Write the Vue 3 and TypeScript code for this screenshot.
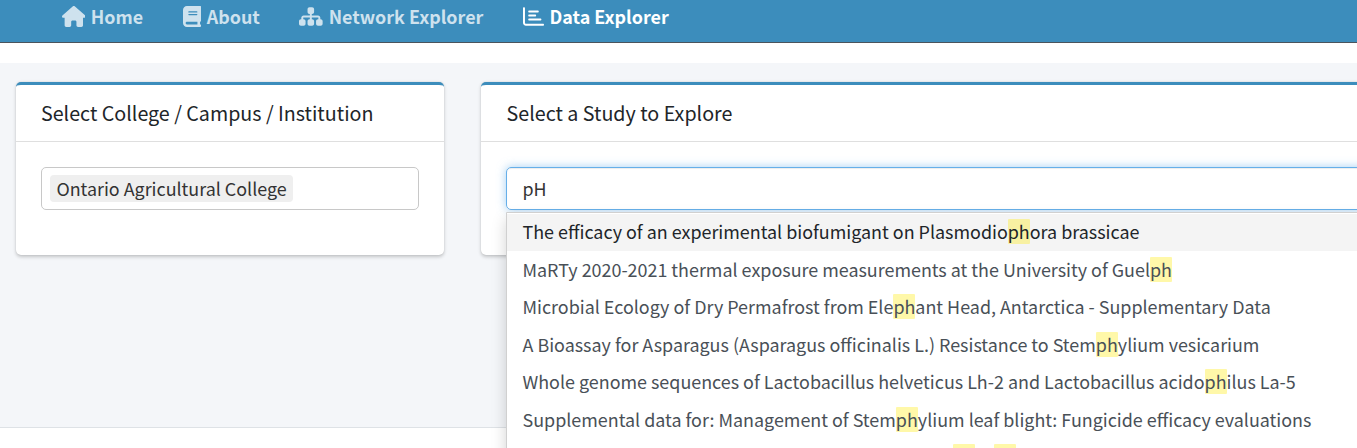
<script setup lang="ts">
interface NavItem {
  label: string
  width: number
  path: string
  active?: boolean
}

const navItems: NavItem[] = [
  {
    label: 'Home',
    width: 576,
    path: 'M575.8 255.5c0 18-15 32.1-32 32.1h-32l.7 160.2c0 2.7-.2 5.4-.5 8.1V472c0 22.1-17.9 40-40 40H456c-1.1 0-2.2 0-3.3-.1c-1.4 .1-2.8 .1-4.2 .1H416 392c-22.1 0-40-17.9-40-40V448 384c0-17.7-14.3-32-32-32H256c-17.7 0-32 14.3-32 32v64 24c0 22.1-17.9 40-40 40H160 128.1c-1.5 0-3-.1-4.5-.2c-1.2 .1-2.4 .2-3.6 .2H104c-22.1 0-40-17.9-40-40V360c0-.9 0-1.9 .1-2.8V287.6H32c-18 0-32-14-32-32.1c0-9 3-17 10-24L266.4 8c7-7 15-8 22-8s15 2 21 7L564.8 231.5c8 7 12 15 11 24z',
  },
  {
    label: 'About',
    width: 448,
    path: 'M96 0C43 0 0 43 0 96V416c0 53 43 96 96 96H384h32c17.7 0 32-14.3 32-32s-14.3-32-32-32V384c17.7 0 32-14.3 32-32V32c0-17.7-14.3-32-32-32H384 96zm0 384H352v64H96c-17.7 0-32-14.3-32-32s14.3-32 32-32zm32-240c0-8.8 7.2-16 16-16H336c8.8 0 16 7.2 16 16s-7.2 16-16 16H144c-8.8 0-16-7.2-16-16zm16 48H336c8.8 0 16 7.2 16 16s-7.2 16-16 16H144c-8.8 0-16-7.2-16-16s7.2-16 16-16z',
  },
  {
    label: 'Network Explorer',
    width: 576,
    path: 'M208 80c0-26.5 21.5-48 48-48h64c26.5 0 48 21.5 48 48v64c0 26.5-21.5 48-48 48h-8v40H464c30.9 0 56 25.1 56 56v32h8c26.5 0 48 21.5 48 48v64c0 26.5-21.5 48-48 48H464c-26.5 0-48-21.5-48-48V368c0-26.5 21.5-48 48-48h8V288c0-4.4-3.6-8-8-8H312v40h8c26.5 0 48 21.5 48 48v64c0 26.5-21.5 48-48 48H256c-26.5 0-48-21.5-48-48V368c0-26.5 21.5-48 48-48h8V280H112c-4.4 0-8 3.6-8 8v32h8c26.5 0 48 21.5 48 48v64c0 26.5-21.5 48-48 48H48c-26.5 0-48-21.5-48-48V368c0-26.5 21.5-48 48-48h8V288c0-30.9 25.1-56 56-56H264V192h-8c-26.5 0-48-21.5-48-48V80z',
  },
  {
    label: 'Data Explorer',
    width: 512,
    active: true,
    path: 'M24 32c13.3 0 24 10.7 24 24V408c0 13.3 10.7 24 24 24H488c13.3 0 24 10.7 24 24s-10.7 24-24 24H72c-39.8 0-72-32.2-72-72V56C0 42.7 10.7 32 24 32zM128 136c0-13.3 10.7-24 24-24l208 0c13.3 0 24 10.7 24 24s-10.7 24-24 24l-208 0c-13.3 0-24-10.7-24-24zm24 72H296c13.3 0 24 10.7 24 24s-10.7 24-24 24H152c-13.3 0-24-10.7-24-24s10.7-24 24-24zm0 96H424c13.3 0 24 10.7 24 24s-10.7 24-24 24H152c-13.3 0-24-10.7-24-24s10.7-24 24-24z',
  },
]

const studies: string[] = [
  'The efficacy of an experimental biofumigant on Plasmodiophora brassicae',
  'MaRTy 2020-2021 thermal exposure measurements at the University of Guelph',
  'Microbial Ecology of Dry Permafrost from Elephant Head, Antarctica - Supplementary Data',
  'A Bioassay for Asparagus (Asparagus officinalis L.) Resistance to Stemphylium vesicarium',
  'Whole genome sequences of Lactobacillus helveticus Lh-2 and Lactobacillus acidophilus La-5',
  'Supplemental data for: Management of Stemphylium leaf blight: Fungicide efficacy evaluations',
]

// Splits a title so that every odd part is a match of the query.
const parts = (title: string): string[] => title.split(/(ph)/)
</script>

<template>
  <div class="page">
    <nav class="navbar">
      <a v-for="n in navItems" :key="n.label" class="nav-link" :class="{ active: n.active }">
        <svg class="icon" :viewBox="`0 0 ${n.width} 512`" :style="{ width: `${(n.width / 512) * 21}px` }">
          <path :d="n.path" />
        </svg>
        <span>{{ n.label }}</span>
      </a>
    </nav>
    <main class="content">
      <section class="card college">
        <h3 class="card-header">Select College / Campus / Institution</h3>
        <div class="card-body">
          <div class="field"><span class="tag">Ontario Agricultural College</span></div>
        </div>
      </section>
      <section class="card study">
        <h3 class="card-header">Select a Study to Explore</h3>
        <div class="card-body">
          <div class="field focus">
            <span class="query">pH</span>
            <div class="dropdown">
              <div v-for="(s, i) in studies" :key="s" class="option" :class="{ selected: i === 0 }">
                <template v-for="(p, j) in parts(s)" :key="j"><mark v-if="j % 2">{{ p }}</mark><template v-else>{{ p }}</template></template>
              </div>
              <div class="option clipped"><mark class="blank"></mark><mark class="blank"></mark></div>
            </div>
          </div>
        </div>
      </section>
    </main>
    <footer class="footer"></footer>
  </div>
</template>

<style>
body {
  margin: 0;
  overflow: hidden;
}
</style>

<style scoped>
.page {
  display: flex;
  flex-direction: column;
  width: 1357px;
  height: 448px;
  overflow: hidden;
  background: #fff;
  color: #212529;
  font-family: "Noto Sans CJK SC", "Noto Sans", sans-serif;
  font-size: 17.9px;
  line-height: 25px;
}
.navbar {
  display: flex;
  flex: none;
  box-sizing: border-box;
  height: 43px;
  padding: 0 0 9px 61.5px;
  gap: 39.5px;
  align-items: center;
  background: #3c8dbc;
  border-bottom: 1px solid #4b545c;
}
.nav-link {
  display: flex;
  align-items: center;
  gap: 5.7px;
  color: rgba(255, 255, 255, 0.75);
  font-size: 17.9px;
  font-weight: 700;
  white-space: nowrap;
}
.nav-link.active {
  color: #fff;
}
.icon {
  height: 21px;
  fill: currentColor;
}
.content {
  display: flex;
  flex: none;
  box-sizing: border-box;
  height: 364px;
  margin-top: 20px;
  padding: 19px 0 0 16px;
  gap: 37px;
  align-items: flex-start;
  background: #f4f6f9;
}
.card {
  flex: none;
  box-sizing: border-box;
  height: 173px;
  background: #fff;
  border-top: 3px solid #3c8dbc;
  border-radius: 5px;
  box-shadow: 0 0 1.25px rgba(0, 0, 0, 0.125), 0 1.25px 3.75px rgba(0, 0, 0, 0.2);
}
.college {
  width: 428px;
}
.study {
  width: 910px;
}
.card-header {
  box-sizing: border-box;
  height: 57px;
  margin: 0;
  padding: 15px 25px 0;
  border-bottom: 1px solid rgba(0, 0, 0, 0.125);
  font-size: 19.68px;
  font-weight: 400;
  line-height: 26px;
}
.study .card-header {
  padding-left: 25.6px;
}
.card-body {
  padding: 25px;
}
.field {
  position: relative;
  display: flex;
  box-sizing: border-box;
  height: 43px;
  padding: 7px 8px;
  border: 1px solid #c8c8c8;
  border-radius: 5px;
  color: #333;
}
.focus {
  padding-left: 15.5px;
  border-color: #66afe9;
  box-shadow: inset 0 1px 1px rgba(0, 0, 0, 0.075), 0 0 10px rgba(102, 175, 233, 0.6);
}
.tag {
  height: 27px;
  padding: 0 6.4px;
  background: #efefef;
  border-radius: 4px;
  line-height: 27px;
}
.query {
  line-height: 27px;
}
.dropdown {
  position: absolute;
  z-index: 2;
  top: 44px;
  left: -1px;
  width: 862px;
  box-sizing: border-box;
  background: #fff;
  border: 1px solid #d0d0d0;
  border-radius: 0 0 5px 5px;
  box-shadow: 0 7.5px 15px rgba(0, 0, 0, 0.175);
}
.option {
  box-sizing: border-box;
  height: 37.5px;
  padding: 6.25px 15.5px;
  overflow: hidden;
  color: #495057;
  font-size: 17.91px;
  white-space: nowrap;
}
.option.selected {
  background: #f4f4f4;
  border-top: 1px solid #fff;
  padding-top: 5.25px;
  color: #212529;
}
.clipped {
  display: flex;
  gap: 19px;
  padding-left: 446px;
}
mark {
  display: inline-block;
  height: 25px;
  background: rgba(255, 237, 40, 0.4);
  border-radius: 1px;
  color: inherit;
  vertical-align: top;
}
.blank {
  width: 22px;
}
.footer {
  flex: 1;
  background: #fff;
  border-top: 1px solid #dee2e6;
}
</style>
